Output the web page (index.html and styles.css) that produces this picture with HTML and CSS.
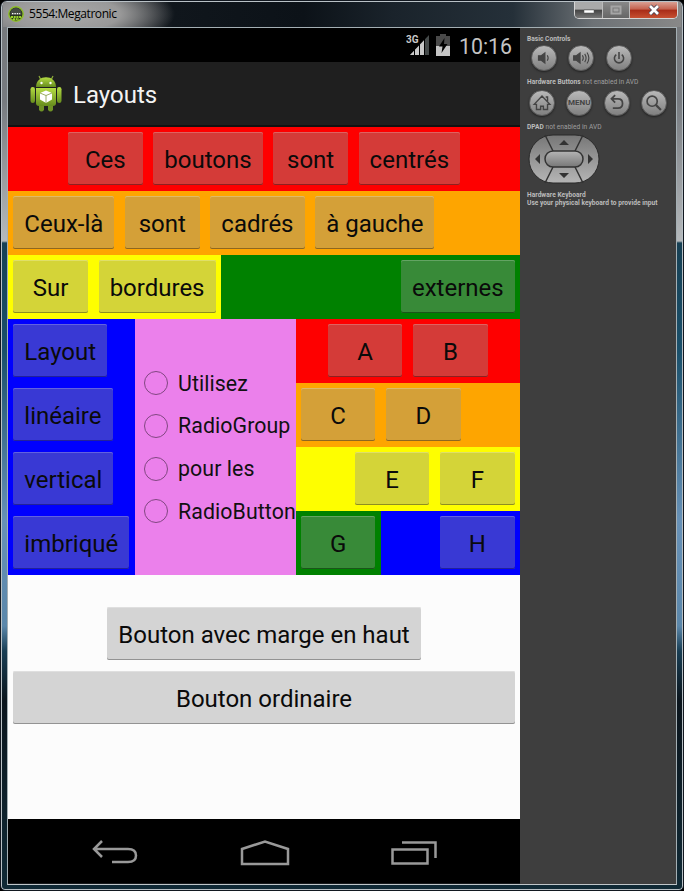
FILE: index.html
```html
<!DOCTYPE html>
<html lang="fr">
<head>
<meta charset="utf-8">
<title>5554:Megatronic</title>
<link rel="stylesheet" href="styles.css">
</head>
<body>
<div class="window">
  <header class="titlebar">
    <svg class="app-icon" width="16" height="16" viewBox="0 0 16 16"><circle cx="8" cy="8" r="7.2" fill="#26301d" stroke="#8fbd2c" stroke-width="1.5"/><path d="M2.5 7a5.5 5 0 0 1 11 0v2h-11z" fill="#444a42"/><path d="M4 7.7h1.4m1 0h1.4m1 0h1.4m1 0h1" stroke="#fff" stroke-width="1.3"/><path d="M3 11h10M5 13.2h6" stroke="#9bd52e" stroke-width="1.8" stroke-dasharray="2 .7"/></svg>
    <span class="title">5554:Megatronic</span>
    <div class="controls">
      <span class="control min"><svg width="12" height="8" viewBox="0 0 12 8"><path d="M1 4h10v3H1z" fill="#fff" stroke="#555" stroke-width=".5"/></svg></span>
      <span class="control max"><svg width="12" height="10" viewBox="0 0 12 10"><path d="M1.500 1.500h9v7h-9zM4.500 4.500h3v1h-3z" fill="none" stroke="#a5a5a5" stroke-width="2"/></svg></span>
      <span class="control close"><svg width="14" height="12" viewBox="0 0 14 12"><path d="M3 2l8 8M11 2l-8 8" stroke="#4a4554" stroke-width="4.4"/><path d="M3 2l8 8M11 2l-8 8" stroke="#fff" stroke-width="2.7"/></svg></span>
    </div>
  </header>
  <main class="client">
    <section class="device">
      <div class="status">
        <svg width="24" height="24" viewBox="0 0 24 24"><text x="0" y="10" class="net">3G</text><path d="M4 22L23 2v20z" fill="#454a4a"/><path d="M4 22L18.500 6.800V22z" fill="#c9c9c9"/><path d="M8.500 14v8M13.500 9v13M18.500 5v17" stroke="#000" stroke-width="1"/></svg>
        <svg width="14" height="22" viewBox="0 0 14 22"><path d="M4 0h6v2h4v10H0V2h4z" fill="#4a4a4a"/><path d="M0 12h14v10H0z" fill="#c4c4c4"/><path d="M8.500 4L3 12.500h3.500L5.500 19 11.500 10H8z" fill="#000"/></svg>
        <span class="clock">10:16</span>
      </div>
      <div class="actionbar">
        <svg width="32" height="38" viewBox="0 0 32 38">
          <defs><linearGradient id="g" x2="0" y2="1"><stop offset="0" stop-color="#b5dd43"/><stop offset="1" stop-color="#668c1d"/></linearGradient></defs>
          <path d="M10.500 4L9 1M21.500 4L23 1" stroke="#8cab39" stroke-width="1.2"/>
          <path d="M6 12C6 -1 26 -1 26 12z" fill="url(#g)"/><circle cx="11.500" cy="8" r="1.200" fill="#fff"/><circle cx="20.500" cy="8" r="1.200" fill="#fff"/>
          <rect x=".5" y="12" width="4.500" height="16" rx="2.200" fill="url(#g)"/><rect x="27" y="12" width="4.500" height="16" rx="2.200" fill="url(#g)"/>
          <path d="M9 26h5v9q-2.500 3-5 0zM18 26h5v9q-2.500 3-5 0z" fill="#6f9225"/>
          <path d="M6 13h20v15q0 3-3 3H9q-3 0-3-3z" fill="url(#g)"/>
          <path d="M16 15.500l6 2.500v6.500L16 28l-6-3.500V18z" fill="#fff"/><path d="M10 18l6 2.500 6-2.500M16 20.500V28" fill="none" stroke="#81983c" stroke-width=".8"/>
        </svg>
        <span class="app-name">Layouts</span>
      </div>
      <div class="content">
        <div class="row red center"><button>Ces</button><button>boutons</button><button>sont</button><button>centrés</button></div>
        <div class="row orange"><button>Ceux-là</button><button>sont</button><button>cadrés</button><button>à gauche</button></div>
        <div class="row green">
          <div class="row yellow"><button>Sur</button><button>bordures</button></div>
          <div class="row end grow"><button>externes</button></div>
        </div>
        <div class="nested">
          <div class="column blue"><div class="row"><button>Layout</button></div><div class="row"><button>linéaire</button></div><div class="row"><button>vertical</button></div><div class="row"><button>imbriqué</button></div></div>
          <div class="radios">
            <label><i></i>Utilisez</label><label><i></i>RadioGroup</label><label><i></i>pour les</label><label><i></i>RadioButton</label>
          </div>
          <div class="grow">
            <div class="row red center"><button>A</button><button>B</button></div>
            <div class="row orange"><button>C</button><button>D</button></div>
            <div class="row yellow end"><button>E</button><button>F</button></div>
            <div class="row blue"><div class="row green"><button>G</button></div><div class="row end grow"><button>H</button></div></div>
          </div>
        </div>
        <div class="row center plain spaced"><button>Bouton avec marge en haut</button></div>
        <div class="row plain"><button class="grow">Bouton ordinaire</button></div>
      </div>
      <nav class="navbar">
        <svg width="46" height="26" viewBox="0 0 46 26"><path d="M10 1L2 9l8 8M3 9h33q8 0 8 6.500T36 22H20" fill="none" stroke="#999" stroke-width="2.500"/></svg>
        <svg width="50" height="26" viewBox="0 0 50 26"><path d="M2 24V9l23-7.500L48 9v15z" fill="none" stroke="#999" stroke-width="2.500"/></svg>
        <svg width="46" height="26" viewBox="0 0 46 26"><path d="M1.500 9.500h35v14h-35zM11 2.500h33.500V18" fill="none" stroke="#999" stroke-width="2.500"/></svg>
      </nav>
    </section>
    <aside class="panel">
      <p><b>Basic Controls</b></p>
      <div class="keys basic">
        <span class="key"><svg viewBox="0 0 26 26"><path d="M7 10.500h3l4-3v11l-4-3H7z" fill="#444"/><path d="M16.500 10q2 3 0 6" /></svg></span>
        <span class="key"><svg viewBox="0 0 26 26"><path d="M5 10.500h3l4-3v11l-4-3H5z" fill="#444"/><path d="M14.500 10q2 3 0 6M17 8.500q3 4.500 0 9M19.500 7q4 6 0 12"/></svg></span>
        <span class="key"><svg viewBox="0 0 26 26"><path d="M10 9.300a5 5 0 1 0 6 0M13 6.500V14" stroke-width="1.700"/></svg></span>
      </div>
      <p class="hw"><b>Hardware Buttons</b> not enabled in AVD</p>
      <div class="keys">
        <span class="key"><svg viewBox="0 0 26 26"><path d="M4.500 14.500L13 5.500l8.500 9h-2.500v5.500h-4.500v-3.500h-3V20H7v-5.500z" stroke-width="1.500"/><path d="M17 6.500h2v4.500" stroke-width="1.500"/></svg></span>
        <span class="key menu">MENU</span>
        <span class="key"><svg viewBox="0 0 26 26"><path d="M11 4.500L7 8.500l4 4M7.500 8.500H14q5 0 5 5T14 18.500H8.500" stroke-width="1.900"/></svg></span>
        <span class="key"><svg viewBox="0 0 26 26"><circle cx="11" cy="11" r="5.500" stroke-width="1.800"/><path d="M15 15l5.500 5.500" stroke-width="2.400"/></svg></span>
      </div>
      <p class="dp"><b>DPAD</b> not enabled in AVD</p>
      <svg class="dpad" width="72" height="50" viewBox="0 0 72 50"><defs><linearGradient id="d" x2="0" y2="1"><stop offset="0" stop-color="#777"/><stop offset="1" stop-color="#b5b5b5"/></linearGradient><linearGradient id="e" x2="0" y2="1"><stop offset="0" stop-color="#b5b5b5"/><stop offset="1" stop-color="#777"/></linearGradient></defs><rect x="1" y="1" width="70" height="48" rx="24" fill="url(#d)" stroke="#292929"/><path d="M17 1l8 16M55 1l-8 16M17 49l8-16M55 49l-8-16" stroke="#333" stroke-width="1.500"/><rect x="17" y="17" width="38" height="16" rx="8" fill="url(#e)" stroke="#333" stroke-width="1.500"/><path d="M31 11l5-5 5 5zM31 39h10l-5 5zM12 20v10l-5-5zM60 20v10l5-5z" fill="#333"/></svg>
      <p class="hk"><b>Hardware Keyboard<br>Use your physical keyboard to provide input</b></p>
    </aside>
  </main>
</div>
</body>
</html>
```
FILE: styles.css
```css
* { box-sizing: border-box; }
body { margin: 0; background: #000; font-family: Roboto, sans-serif; }
svg { display: block; flex: none; }
.window {
  width: 684px; height: 891px; padding: 0 6px 6px 6px; border: 1px solid #121820;
  border-radius: 7px 7px 5px 5px; box-shadow: inset 0 0 0 1px #b9c1c6;
  background: linear-gradient(#76797c 0, #777b80 100px, #b5b9bc 240px, #174054 242px, #1a506b 350px, #6791b7 520px, #5b87aa 625px, #193e54 650px, #0b151d 700px, #102a36 100%);
}
.titlebar {
  height: 25px; margin: 1px -4px 0; padding-left: 5px; display: flex; align-items: flex-start; gap: 5px;
  background: radial-gradient(ellipse 110px 34px at 62px 12px, #aaa 0, #999 50%, transparent 100%), linear-gradient(90deg, #62656a 0, #3c3f43 110px, #10161c 170px, #0c1218 300px, #1a232b 390px, #253039 510px, #6d7276 590px, #888 100%);
}
.app-icon { margin-top: 4px; }
.title { font: 12px/24px "Open Sans", sans-serif; color: #000; letter-spacing: -.42px; }
.controls { margin-left: auto; margin-right: 3px; height: 17px; display: flex; border: 1px solid #d5d5d5; border-top: 0; border-radius: 0 0 5px 5px; overflow: hidden; }
.control { display: flex; align-items: center; justify-content: center; }
.min { width: 28px; background: linear-gradient(#aaa 0 45%, #444 50%, #777); border-right: 1px solid #bbb; }
.max { width: 27px; background: linear-gradient(#888, #666); border-right: 1px solid #bbb; }
.close { width: 47px; background: linear-gradient(#d9a093 0, #c5614e 45%, #a82b17 50%, #c64f31); }
.client { height: 858px; display: flex; border: 1px solid #a4afb4; border-bottom-color: #c0c6c9; background: #171a1c; }
.device { width: 512px; height: 855px; display: flex; flex-direction: column; background: #fcfcfc; }
.status { height: 34px; padding-top: 2px; background: #000; display: flex; align-items: center; justify-content: flex-end; padding-right: 8px; }
.status svg { margin-top: -2px; }
.status svg + svg { margin-left: 6px; }
.net { font: 700 10px "Roboto", sans-serif; fill: #c9c9c9; }
.clock { margin-left: 9px; font-size: 21.3px; color: #c4c4c4; }
.actionbar { height: 65px; display: flex; align-items: center; gap: 11px; padding-left: 22px; background: #1f1f1f; border-bottom: 2px solid #111; color: #f3f3f3; }
.app-name { font-size: 24px; padding-top: 2px; }
.content { flex: 1; }
.row { height: 64px; display: flex; }
.grow { flex: 1; }
.center { justify-content: center; }
.end { justify-content: flex-end; }
.red { background: #fe0000; --face: #d43b38; --light: #df6260; --dark: #8e2020; }
.orange { background: #fea500; --face: #d4a038; --light: #dfb968; --dark: #8e6720; }
.yellow { background: #fefe00; --face: #d4d438; --light: #dfdf68; --dark: #8e8e20; }
.green { background: #008100; --face: #388a38; --light: #63a463; --dark: #1b551b; }
.blue { background: #0000fe; --face: #3939d4; --light: #6262df; --dark: #22229a; }
.plain { --face: #d4d4d4; --light: #dfdfdf; --dark: #939393; }
button {
  height: 53px; margin: 5px 5.33px 6px; padding: 3px 11px 0; min-width: 74.67px; border: 0; border-radius: 2px;
  background: var(--face); box-shadow: inset 0 1px var(--light), inset 0 -1px var(--dark);
  font: 24px/50px Roboto, sans-serif; color: #0a0a0a; white-space: nowrap;
}
.nested { display: flex; }
.column { width: 127px; }
.radios { width: 160.500px; padding: 43px 0 0 9px; background: #eb80eb; white-space: nowrap; }
.radios label { height: 42.67px; display: flex; align-items: center; gap: 10px; font-size: 21.33px; letter-spacing: .08px; color: #111; }
.radios i { width: 24px; height: 24px; flex: none; border: 1px solid #814781; border-radius: 50%; }
.spaced { margin-top: 27px; }
.navbar { height: 64px; background: #000; display: flex; align-items: center; justify-content: space-between; padding: 3px 83px 0 84px; }
.panel { width: 156px; background: #3e3e3e; padding: 7px 0 0 7px; color: #9f9f9f; }
.panel p { margin: 0; font-size: 6.600px; line-height: 8px; letter-spacing: .03px; white-space: nowrap; }
.panel b { color: #bcbcbc; }
.keys { display: flex; gap: 11.300px; margin: 9px 0 0 2px; }
.basic { margin: 2px 0 0 4px; }
.key { width: 26px; height: 26px; flex: none; border-radius: 50%; border: 1px solid #5b5b5b; background: linear-gradient(#b9b9b9, #808080); box-shadow: 0 1px 2px #222; }
.key svg { width: 100%; height: 100%; fill: none; stroke: #444; stroke-width: 1.200; }
.menu { font: 700 8px/24px Roboto, sans-serif; color: #444; text-align: center; }
.panel .hw { margin-top: 7px; }
.hw + .keys { margin-top: 4px; }
.panel .dp { margin-top: 7px; }
.dpad { margin: 3px 0 0 1px; }
.panel .hk { margin-top: 7px; }
```
